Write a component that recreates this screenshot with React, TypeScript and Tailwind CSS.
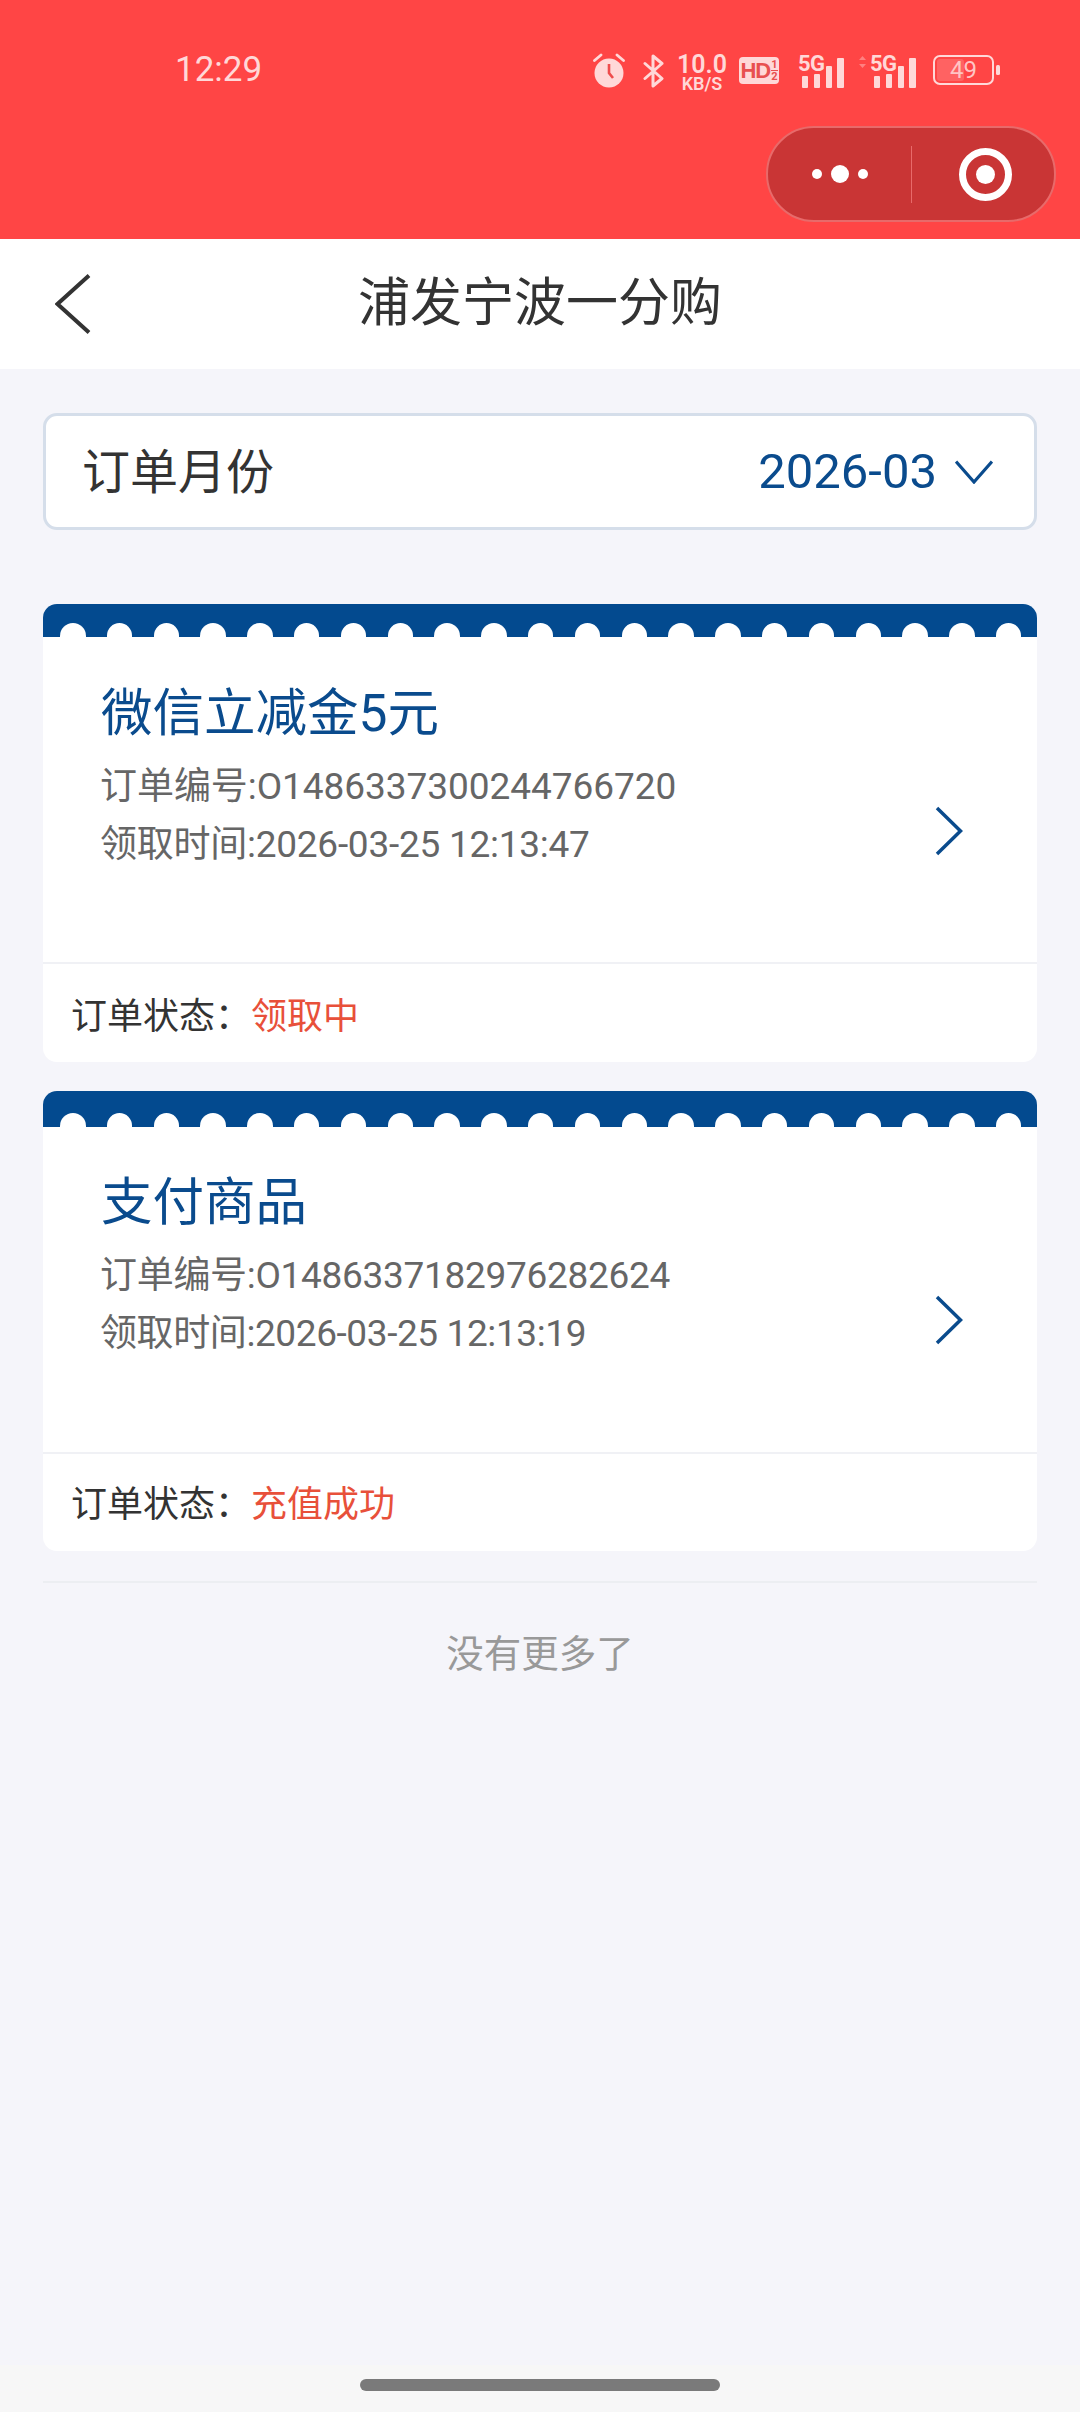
import React from "react";

const dots = Array.from({ length: 21 }, (_, i) => i);
const ink = "#ffd8d8";

function Alarm() {
  return (
    <svg width="32" height="36" viewBox="0 0 32 36" className="shrink-0">
      <circle cx="16" cy="21" r="14.5" fill={ink} />
      <path d="M16 12v9l4 5" fill="none" stroke="#ef4c4c" strokeWidth="2.6" />
      <path d="M1.5 8.5 8 3M30.5 8.5 24 3" stroke={ink} strokeWidth="2.8" strokeLinecap="round" />
    </svg>
  );
}

function Bluetooth() {
  return (
    <svg width="21" height="34" viewBox="0 0 21 34" className="shrink-0 ml-[18px]">
      <path d="M2 9.5 19 24.5 10 32V2l9 7.5L2 24.5" fill="none" stroke={ink} strokeWidth="3" strokeLinejoin="round" strokeLinecap="round" />
    </svg>
  );
}

function Speed() {
  return (
    <div className="ml-[14px] w-[48px] flex flex-col items-center text-[#ffd8d8] font-semibold">
      <span className="text-[25px] leading-[22px] h-[22px]">10.0</span>
      <span className="text-[18px] leading-[13px] mt-[1px] whitespace-nowrap">KB/S</span>
    </div>
  );
}

function Hd() {
  return (
    <div className="ml-[13px] w-[40px] h-[27px] rounded-[4px] bg-[#ffd8d8] flex items-center justify-center text-[#e85050] font-bold">
      <span className="text-[22px] leading-none tracking-[-1px] [font-family:'Liberation_Sans',sans-serif]">HD</span>
      <span className="flex flex-col items-center text-[11px] leading-[11px] ml-[1px]">
        <span>1</span>
        <span className="border-t border-[#e85050]">2</span>
      </span>
    </div>
  );
}

function Signal({ arrows }: { arrows?: boolean }) {
  return (
    <svg
      width={arrows ? 58 : 46}
      height="34"
      viewBox={arrows ? "-12 0 58 34" : "0 0 46 34"}
      className={arrows ? "shrink-0 ml-[14px] overflow-visible" : "shrink-0 ml-[19px] overflow-visible"}
    >
      {arrows && <path d="M-11 6-7.500 2-4 6ZM-11 10-7.500 14-4 10Z" fill="#ff8080" />}
      <text x="0" y="17" fontSize="22" fontWeight="700" fill={ink} fontFamily="Roboto, sans-serif" letterSpacing="-0.5">
        5G
      </text>
      <rect x="4" y="22" width="6" height="12" rx="1" fill={ink} />
      <rect x="16" y="20" width="6" height="14" rx="1" fill={ink} />
      <rect x="28" y="12" width="6" height="22" rx="1" fill={ink} />
      <rect x="39" y="4" width="7" height="30" rx="1" fill={ink} />
    </svg>
  );
}

function Battery() {
  return (
    <svg width="67" height="30" viewBox="0 0 67 30" className="shrink-0 ml-[17px]">
      <rect x="1" y="1" width="59" height="28" rx="6" fill="none" stroke={ink} strokeWidth="2" />
      <rect x="4" y="4" width="27" height="22" rx="3" fill="#ff6262" />
      <rect x="63" y="10" width="4" height="10" rx="1.500" fill={ink} />
      <text x="30.500" y="23" textAnchor="middle" fontSize="24" fill="#ffc4c4" fontFamily="Roboto, sans-serif">
        49
      </text>
    </svg>
  );
}

function Card({
  title,
  no,
  time,
  status,
  band,
  dotTop,
  pad,
  foot,
  noTrack,
  timeTrack,
}: {
  title: string;
  no: string;
  time: string;
  status: string;
  band: string;
  dotTop: string;
  pad: string;
  foot: string;
  noTrack: string;
  timeTrack: string;
}) {
  return (
    <div className="rounded-[14px] bg-white overflow-hidden">
      <div className={`bg-[#034a8f] overflow-hidden flex gap-[21.3px] pl-[17px] ${band} ${dotTop}`}>
        {dots.map((d) => (
          <div key={d} className="w-[25.500px] h-[26px] rounded-full bg-white shrink-0" />
        ))}
      </div>
      <div className={`h-[325px] flex justify-between pl-[58px] pr-[74px] ${pad}`}>
        <div className="flex flex-col">
          <div className="text-[51.500px] leading-[60px] text-[#0a4b8d] mb-[14px]">{title}</div>
          <div className={`text-[37px] leading-[58px] text-[#666666] -ml-[1px] ${noTrack}`}>{no}</div>
          <div className={`text-[37px] leading-[58px] text-[#666666] -ml-[1px] ${timeTrack}`}>{time}</div>
        </div>
        <svg width="28" height="50" viewBox="0 0 28 50" className="mt-[122px] shrink-0">
          <path d="M2 2 25.500 25 2 48" fill="none" stroke="#0a4b8d" strokeWidth="3.500" />
        </svg>
      </div>
      <div className={`border-t-[2px] border-[#f0f1f5] flex items-center pl-[28px] text-[36px] ${foot}`}>
        <span className="text-[#333333]">订单状态：</span>
        <span className="text-[#e8503a]">{status}</span>
      </div>
    </div>
  );
}

export default function App() {
  return (
    <div className="w-[1080px] h-[2412px] flex flex-col bg-[#f5f5fa] [font-family:Roboto,'Noto_Sans_CJK_SC',sans-serif]">
      <header className="h-[239px] shrink-0 bg-[#ff4545] flex flex-col">
        <div className="h-[126px] pt-[52px] flex items-start">
          <span className="ml-[175px] w-[85px] text-[35px] leading-[36px] text-[#ffd8d8]">12:29</span>
          <div className="ml-[333px] flex items-start h-[36px]">
            <Alarm />
            <div className="mt-[2px] flex items-start">
              <Bluetooth />
              <Speed />
              <div className="mt-[3px]">
                <Hd />
              </div>
              <Signal />
              <Signal arrows />
              <div className="mt-[1px]">
                <Battery />
              </div>
            </div>
          </div>
        </div>
        <div className="self-end mr-[24px] w-[290px] h-[96px] rounded-full bg-[#c93535] border-[2px] border-[#e86a6a] flex items-center">
          <div className="w-[143px] flex items-center justify-center gap-[9px]">
            <span className="w-[10px] h-[10px] rounded-full bg-white" />
            <span className="w-[18px] h-[18px] rounded-full bg-white" />
            <span className="w-[10px] h-[10px] rounded-full bg-white" />
          </div>
          <div className="w-[1px] h-[57px] bg-[#e86a6a]" />
          <div className="flex-1 pl-[4px] flex items-center justify-center">
            <div className="w-[53px] h-[53px] rounded-full border-[7px] border-white flex items-center justify-center">
              <span className="w-[19px] h-[19px] rounded-full bg-white" />
            </div>
          </div>
        </div>
      </header>

      <nav className="h-[130px] shrink-0 bg-white grid grid-cols-[1fr_auto_1fr] items-center">
        <svg width="36" height="60" viewBox="0 0 36 60" className="ml-[55px]">
          <path d="M34 1.500 2.500 30 34 58.500" fill="none" stroke="#333333" strokeWidth="4" />
        </svg>
        <div className="text-[52px] leading-none text-[#333333]">浦发宁波一分购</div>
        <div />
      </nav>

      <main className="flex-1 px-[43px] pt-[44px] flex flex-col">
        <div className="h-[117px] shrink-0 rounded-[14px] bg-white border-[3px] border-[#d5deea] flex items-center justify-between pl-[36px] pr-[41px]">
          <span className="text-[48px] text-[#333333] relative top-[1px]">订单月份</span>
          <div className="flex items-center">
            <span className="text-[49px] leading-none text-[#0a4b8d]">2026-03</span>
            <svg width="38" height="24" viewBox="0 0 38 24" className="ml-[18px]">
              <path d="M1 1.500 19 22 37 1.500" fill="none" stroke="#0a4b8d" strokeWidth="3.200" />
            </svg>
          </div>
        </div>

        <div className="mt-[74px]">
          <Card
            title="微信立减金5元"
            no="订单编号:O1486337300244766720"
            time="领取时间:2026-03-25 12:13:47"
            status="领取中"
            band="h-[33px]"
            dotTop="pt-[19px]"
            pad="pt-[47px]"
            foot="h-[100px] pt-[7px]"
            noTrack="tracking-[-0.05px]"
            timeTrack="tracking-[-0.25px]"
          />
        </div>
        <div className="mt-[29px]">
          <Card
            title="支付商品"
            no="订单编号:O1486337182976282624"
            time="领取时间:2026-03-25 12:13:19"
            status="充值成功"
            band="h-[36px]"
            dotTop="pt-[22px]"
            pad="pt-[46px]"
            foot="h-[99px] pt-[5px]"
            noTrack="tracking-[-0.3px]"
            timeTrack="tracking-[-0.4px]"
          />
        </div>
        <div className="mt-[30px] border-t-[2px] border-[#eceef2] pt-[49px] text-center text-[37.500px] leading-[44px] text-[#999999]">没有更多了</div>
      </main>

      <div className="h-[47px] shrink-0 bg-[#f7f7f7] flex justify-center pt-[14px]">
        <div className="w-[360px] h-[12px] rounded-full bg-[#7a7a7a]" />
      </div>
    </div>
  );
}
